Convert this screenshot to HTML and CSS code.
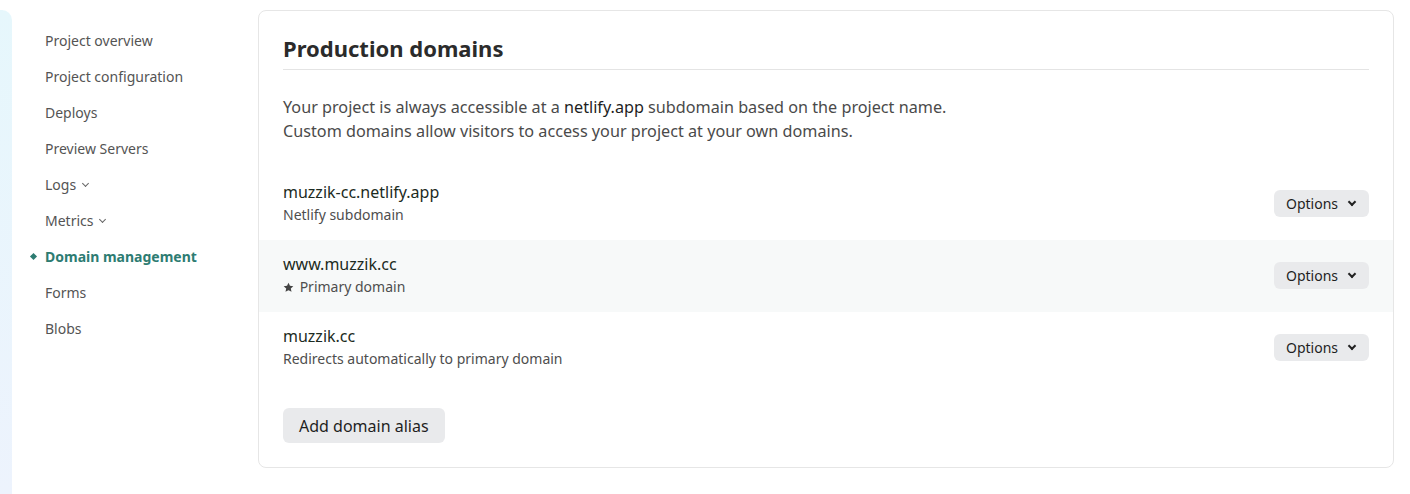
FILE: index.html
```html
<!DOCTYPE html>
<html lang="en">
<head>
    <meta charset="UTF-8">
    <title>Domain management</title>
    <link rel="stylesheet" href="styles.css">
</head>
<body>
    <div class="layout">
        <div class="rail"></div>

        <nav class="sidenav">
            <a href="#">Project overview</a>
            <a href="#">Project configuration</a>
            <a href="#">Deploys</a>
            <a href="#">Preview Servers</a>
            <a href="#">Logs <span class="caret"></span></a>
            <a href="#">Metrics <span class="caret"></span></a>
            <a href="#" class="active">Domain management</a>
            <a href="#">Forms</a>
            <a href="#">Blobs</a>
        </nav>

        <main class="content">
            <section class="card">
                <h2>Production domains</h2>
                <p class="intro">
                    Your project is always accessible at a <span class="strong">netlify.app</span> subdomain based on the project name.<br>
                    Custom domains allow visitors to access your project at your own domains.
                </p>

                <ul class="domains">
                    <li class="domain">
                        <div>
                            <div class="domain-name">muzzik-cc.netlify.app</div>
                            <div class="domain-note">Netlify subdomain</div>
                        </div>
                        <button class="btn-options">Options <span class="chev"></span></button>
                    </li>
                    <li class="domain highlight">
                        <div>
                            <div class="domain-name">www.muzzik.cc</div>
                            <div class="domain-note">
                                <svg class="star" viewBox="0 0 24 24" width="11" height="11"><path d="M12 1.5l3.2 6.9 7.3.8-5.5 5 1.6 7.3L12 17.8l-6.6 3.7L7 14.2l-5.5-5 7.3-.8z" fill="#444"/></svg>
                                Primary domain
                            </div>
                        </div>
                        <button class="btn-options">Options <span class="chev"></span></button>
                    </li>
                    <li class="domain">
                        <div>
                            <div class="domain-name">muzzik.cc</div>
                            <div class="domain-note">Redirects automatically to primary domain</div>
                        </div>
                        <button class="btn-options">Options <span class="chev"></span></button>
                    </li>
                </ul>

                <button class="btn-add">Add domain alias</button>
            </section>
        </main>
    </div>
</body>
</html>
```

FILE: styles.css
```css
body {
    margin: 0;
    font-family: 'Noto Sans', 'Open Sans', sans-serif;
    color: #333;
    background-color: #fff;
}
.layout {
    display: flex;
    height: 494px;
    overflow: hidden;
}
.rail {
    width: 12px;
    flex-shrink: 0;
    margin-top: 10px;
    border-top-right-radius: 10px;
    background: linear-gradient(180deg, #e6f7fc 0%, #edf3fd 100%);
}
.sidenav {
    width: 246px;
    flex-shrink: 0;
    display: flex;
    flex-direction: column;
    padding-top: 30px;
}
.sidenav a {
    position: relative;
    display: flex;
    align-items: center;
    gap: 7px;
    height: 36px;
    padding-left: 33px;
    font-size: 14px;
    color: #545454;
    text-decoration: none;
    line-height: 22px;
    margin-top: -7px;
    margin-bottom: 7px;
}
.sidenav a.active {
    color: #2d7c72;
    font-weight: 700;
}
.sidenav a.active:before {
    content: "";
    position: absolute;
    left: 19px;
    top: 15px;
    width: 5px;
    height: 5px;
    background-color: #2d7c72;
    transform: rotate(45deg);
}
.caret {
    width: 4px;
    height: 4px;
    border-right: 1.3px solid #666;
    border-bottom: 1.3px solid #666;
    transform: rotate(45deg);
    margin-top: -3px;
}
.content {
    flex: 1;
    padding: 10px 16px 0 0;
}
.card {
    border: 1px solid #e6e6e6;
    border-radius: 8px;
    padding: 19px 24px 24px 24px;
    height: 413px;
}
.card h2 {
    margin: 0;
    font-size: 22px;
    font-weight: 700;
    color: #2b2b2b;
    line-height: 36px;
    padding-bottom: 3px;
    border-bottom: 1px solid #e4e4e4;
}
.intro {
    margin: 25px 0 0 0;
    font-size: 16.2px;
    line-height: 24px;
    color: #4a4a4a;
}
.strong {
    color: #1e1e1e;
}
.domains {
    list-style: none;
    margin: 25px -24px 0 -24px;
    padding: 0;
}
.domain {
    display: flex;
    justify-content: space-between;
    align-items: center;
    height: 72px;
    padding: 0 24px 3px 24px;
    box-sizing: border-box;
}
.domain.highlight {
    background-color: #f7f9f9;
}
.domain-name {
    font-size: 16px;
    color: #1c2b22;
    line-height: 24px;
}
.domain-note {
    font-size: 14px;
    color: #4e4e4e;
    line-height: 22px;
}
.star {
    vertical-align: -1px;
    margin-right: 2px;
}
.btn-options {
    display: flex;
    align-items: center;
    gap: 11px;
    height: 27px;
    padding: 0 14px 0 12px;
    margin-top: 2px;
    border: none;
    border-radius: 6px;
    background-color: #e9eaec;
    font-family: inherit;
    font-size: 14px;
    color: #1f1f1f;
    cursor: pointer;
}
.chev {
    width: 4px;
    height: 4px;
    border-right: 2px solid #222;
    border-bottom: 2px solid #222;
    transform: rotate(45deg);
    margin-top: -4px;
}
.btn-add {
    margin-top: 24px;
    height: 35px;
    padding: 0 16px;
    border: none;
    border-radius: 6px;
    background-color: #e9eaec;
    font-family: inherit;
    font-size: 16px;
    color: #1f1f1f;
    cursor: pointer;
}
```
